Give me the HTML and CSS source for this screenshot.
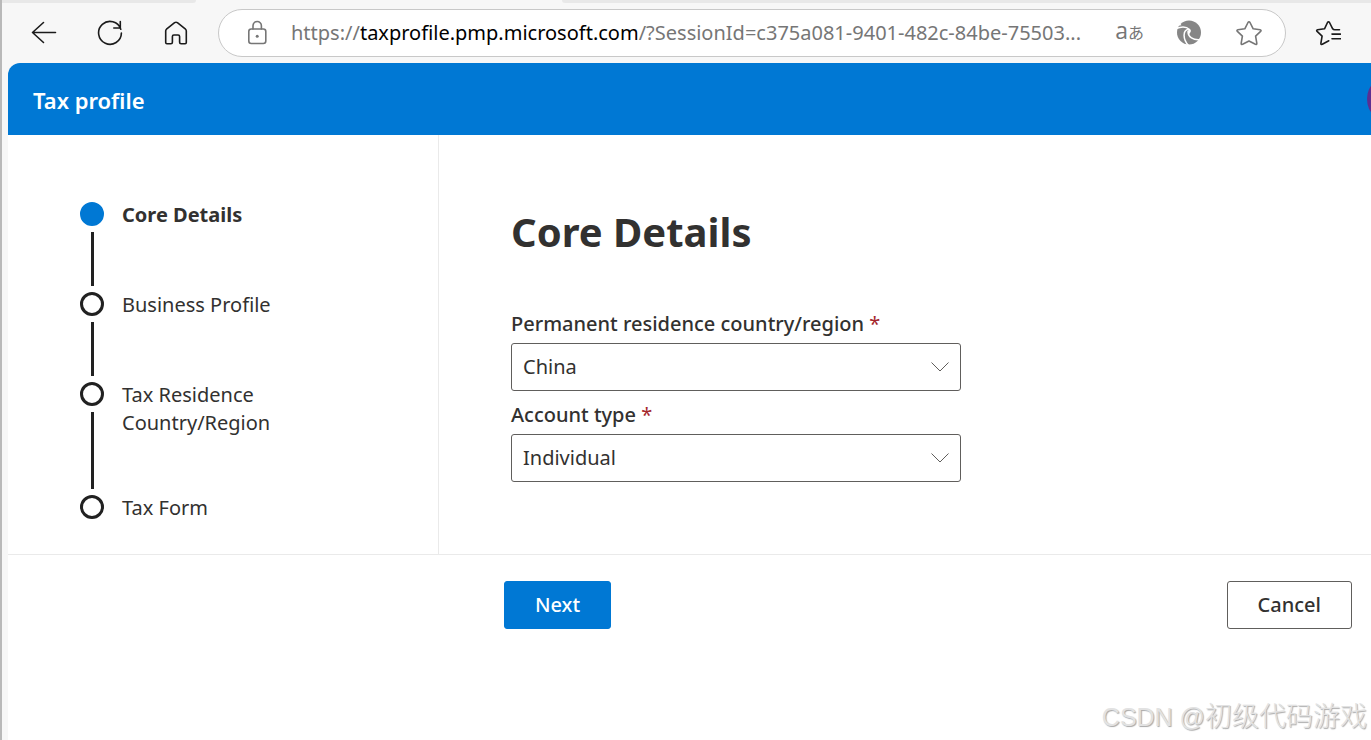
FILE: index.html
```html
<!DOCTYPE html>
<html lang="en">
<head>
<meta charset="utf-8">
<title>Tax profile</title>
<link rel="stylesheet" href="styles.css">
</head>
<body>
<div class="window">
  <div class="tab-strip"><span class="tab-inactive tab-left"></span><span class="tab-gap"></span><span class="tab-inactive tab-right"></span></div>
  <div class="toolbar">
    <button class="tool" aria-label="Back"><svg viewBox="0 0 26 26"><path d="M24.500 12.500H1.500M12.500 2.500 1.500 12.500l11 10"/></svg></button>
    <button class="tool" aria-label="Refresh"><svg viewBox="0 0 26 26"><path d="M23.800 9.200A11.400 11.400 0 1 0 24.400 13M23.300 1.500v6.500h-6.500"/></svg></button>
    <button class="tool" aria-label="Home"><svg viewBox="0 0 26 26"><path d="M11.600 2.700 3.500 9.200Q2.700 10 2.700 11v11.500q0 1.200 1.200 1.200h4q1.500 0 1.500-1.500v-5.700q0-1.500 1.500-1.500h4.200q1.500 0 1.500 1.500v5.700q0 1.500 1.500 1.500h4q1.200 0 1.200-1.200V11q0-1-.8-1.800l-8.100-6.500q-1.400-1-2.800 0z"/></svg></button>
    <div class="address">
      <button class="tool muted" aria-label="Site information"><svg viewBox="0 0 26 26"><rect x="4.800" y="9" width="17" height="14.500" rx="2.500"/><path d="M9 9V5.700a4.200 4.200 0 0 1 8.400 0V9"/><circle class="solid" cx="13.200" cy="16.300" r="1.500"/></svg></button>
      <div class="url" role="textbox" aria-label="Address"><span>https://</span><span class="host">taxprofile.pmp.microsoft.com</span><span>/?SessionId=c375a081-9401-482c-84be-75503...</span></div>
      <button class="translate" aria-label="Translate"><span class="latin">a</span><span class="kana">あ</span></button>
      <button class="tool muted swirl" aria-label="Extension"><svg viewBox="0 0 26 26"><circle class="solid" cx="13" cy="12.500" r="12"/><path class="cut" d="M-.5 3.500C1 7 2.500 5.500 5.500 5.200l-2-2.700z"/><path class="cut" d="M0 8.500C5 6.500 10.500 6.500 13.500 9.500M12.500 9.300C7 10 6.300 18.500 12.500 25.500M12 11.500C12 17 17 20.300 24.500 19.500"/><path class="cut" d="M13 8.800c2 .8 2.500 2.200 1.300 3.700-.8 1-1.200 1.900-1 3.200-1.500-2-1.900-4.700-.3-6.900z"/></svg></button>
      <button class="tool muted" aria-label="Add to favorites"><svg viewBox="0 0 26 26"><path d="M12 2.500q1-1.600 2 0l3.200 6.300 6.900 1q1.600.4.500 1.600l-5 4.800 1.200 7q.1 1.600-1.400 1.100L13 21l-6.400 3.300q-1.500.5-1.400-1.100l1.200-7-5-4.800q-1.100-1.200.5-1.600l6.900-1z"/></svg></button>
    </div>
    <button class="tool" aria-label="Favorites"><svg viewBox="0 0 26 26"><path d="M13.800 20.800 7.300 24.300q-1.500.5-1.400-1.100l1.200-7-5-4.800q-1.100-1.200.5-1.600l6.900-1 3-6.300q1-1.600 2 0l3.200 6.300q.6.900 2 .9h4.800M17 14.100h8.500M17 18.700h8.500"/></svg></button>
  </div>
  <div class="page">
    <header class="header"><span>Tax profile</span><span class="avatar"></span></header>
    <div class="body">
      <nav class="steps" aria-label="Progress">
        <ol>
          <li class="step current"><span class="track"><i class="dot"></i><i class="line"></i></span><span class="name">Core Details</span></li>
          <li class="step"><span class="track"><i class="dot"></i><i class="line"></i></span><span class="name">Business Profile</span></li>
          <li class="step"><span class="track"><i class="dot"></i><i class="line"></i></span><span class="name">Tax Residence Country/Region</span></li>
          <li class="step"><span class="track"><i class="dot"></i></span><span class="name">Tax Form</span></li>
        </ol>
      </nav>
      <main class="content">
        <h1>Core Details</h1>
        <form class="form">
          <label for="country">Permanent residence country/region <span class="required">*</span></label>
          <div class="field"><select id="country"><option>China</option></select><svg viewBox="0 0 18 10"><path d="M.5.500 9 9l8.500-8.500"/></svg></div>
          <label for="account">Account type <span class="required">*</span></label>
          <div class="field"><select id="account"><option>Individual</option></select><svg viewBox="0 0 18 10"><path d="M.5.500 9 9l8.500-8.500"/></svg></div>
        </form>
      </main>
    </div>
    <footer class="actions"><button class="btn primary">Next</button><button class="btn">Cancel</button></footer>
  </div>
  <div class="watermark"><span class="site">CSDN @</span>初级代码游戏</div>
</div>
</body>
</html>
```
FILE: styles.css
```css
* { box-sizing: border-box; }

body {
  margin: 0;
  font-family: "Noto Sans", "Noto Sans CJK SC", sans-serif;
  font-size: 20px;
  line-height: 28px;
  color: #323130;
  background: #f7f7f7;
}

button, select { font: inherit; color: inherit; margin: 0; }

.window {
  position: relative;
  display: flex;
  flex-direction: column;
  min-height: 100vh;
  border-left: 2px solid #b9b9b9;
  overflow: hidden;
}

.tab-strip { display: flex; height: 3px; }
.tab-inactive { background: #e8e8e8; }
.tab-left { width: 194px; border-bottom-right-radius: 6px; }
.tab-gap { width: 366px; }
.tab-right { flex: 1; border-bottom-left-radius: 6px; }

.toolbar {
  display: flex;
  align-items: center;
  gap: 40px;
  height: 60px;
  padding: 0 30px 0 29px;
}

.tool {
  flex: none;
  width: 26px;
  height: 26px;
  padding: 0;
  border: 0;
  background: none;
  color: #1b1b1b;
}
.tool svg {
  display: block;
  width: 26px;
  height: 26px;
  fill: none;
  stroke: currentColor;
  stroke-width: 1.6;
  stroke-linejoin: round;
  stroke-linecap: round;
}
.tool .solid { fill: currentColor; stroke: none; }
.tool .cut { stroke: #fff; stroke-width: 1.5; }
.tool .cut:last-child, .tool .cut:nth-child(2) { fill: #fff; stroke: none; }
.muted { color: #767676; }
.swirl { color: #868686; }

.address {
  display: flex;
  align-items: center;
  flex: 1;
  min-width: 0;
  height: 48px;
  margin: 0 -11px;
  padding: 0 23px 0 25px;
  border: 1px solid #c8c8c8;
  border-radius: 24px;
  background: #fff;
}
.url {
  flex: 1;
  min-width: 0;
  margin-left: 21px;
  overflow: hidden;
  white-space: nowrap;
  color: #767676;
}
.host { color: #000; }
.translate {
  display: flex;
  align-items: center;
  padding: 0;
  border: 0;
  background: none;
  color: #767676;
}
.latin { font-family: "Open Sans", sans-serif; font-size: 23px; line-height: 24px; padding-bottom: 6px; }
.kana { font-family: "Noto Sans CJK JP", sans-serif; font-size: 16px; line-height: 24px; padding-bottom: 2px; }
.translate + .tool { margin: 0 34px 0 32px; }

.page {
  flex: 1;
  margin-left: 6px;
  border-top-left-radius: 12px;
  overflow: hidden;
  background: #fff;
}

.header {
  position: relative;
  display: flex;
  align-items: center;
  height: 72px;
  padding: 2px 25px 0;
  background: #0078d4;
  color: #fff;
  font-size: 22px;
  font-weight: 600;
}
.avatar {
  position: absolute;
  top: 12px;
  right: -44px;
  width: 48px;
  height: 48px;
  border-radius: 50%;
  background: #5c2e91;
}

.body { display: flex; border-bottom: 1px solid #eaeaea; }

.steps {
  flex: none;
  width: 431px;
  padding: 67px 72px 32px;
  border-right: 1px solid #eaeaea;
}
.steps ol { margin: 0; padding: 0; list-style: none; }
.step { display: flex; gap: 18px; min-height: 90px; }
.step:nth-child(3) { min-height: 113px; }
.step:last-child { min-height: 24px; }
.track { display: flex; flex-direction: column; align-items: center; gap: 6px; padding-bottom: 6px; }
.step:last-child .track { padding-bottom: 0; }
.dot { width: 24px; height: 24px; border: 3px solid #212121; border-radius: 50%; }
.current .dot { border-color: #0078d4; background: #0078d4; }
.line { flex: 1; width: 3px; background: #212121; }
.name { width: 170px; margin: -1px 0; }
.current .name { font-weight: 700; }

.content { flex: 1; padding: 69px 72px 72px; }
h1 { margin: 0; font-size: 40px; line-height: 56px; font-weight: 700; }

.form { display: grid; max-width: 450px; margin-top: 48px; }
.form label { height: 35px; padding-top: 2px; font-weight: 500; }
.form .field + label { height: 43px; padding-top: 10px; }
.form .required { color: #a4262c; font-weight: 400; }
.field { position: relative; }
.field select {
  display: block;
  width: 100%;
  height: 48px;
  padding: 0 40px 0 11px;
  border: 1px solid #605e5c;
  border-radius: 3px;
  background: #fff;
  appearance: none;
}
.field svg {
  position: absolute;
  top: 19px;
  right: 12px;
  width: 18px;
  height: 10px;
  fill: none;
  stroke: #605e5c;
  pointer-events: none;
}

.actions {
  display: flex;
  justify-content: space-between;
  padding: 26px 19px 26px 496px;
}
.btn {
  height: 48px;
  padding: 0 30px;
  border: 1px solid #605e5c;
  border-radius: 3px;
  background: #fff;
  font-weight: 500;
}
.primary { border-color: #0078d4; background: #0078d4; color: #fff; }

.watermark {
  position: absolute;
  right: 4px;
  bottom: 6px;
  font-family: "Noto Sans CJK SC", sans-serif;
  font-size: 27px;
  font-weight: 300;
  line-height: 34px;
  color: #e2e2e2;
  text-shadow: 1px 1px 1px #a8a8a8;
}
.site { font-family: "Liberation Sans", sans-serif; font-size: 25px; }
```
